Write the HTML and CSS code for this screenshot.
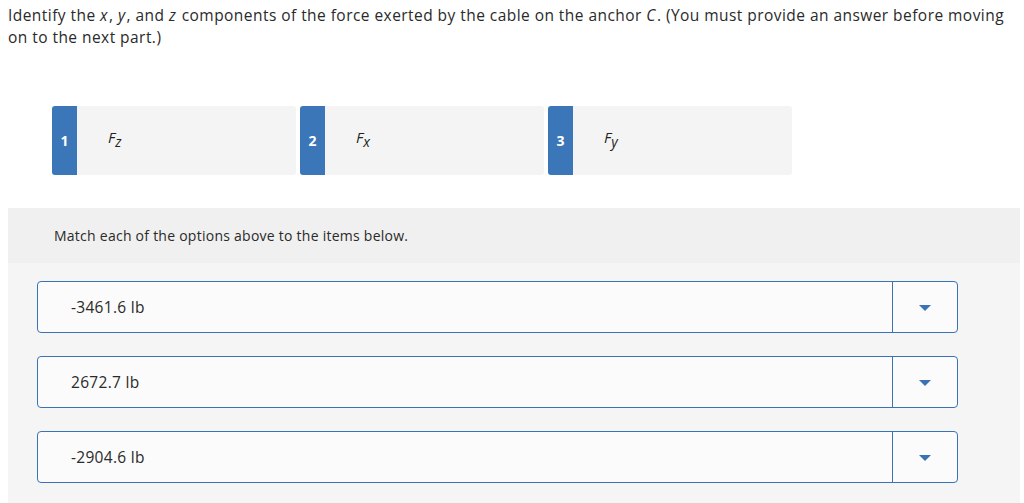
FILE: index.html
```html
<!DOCTYPE html>
<html>
<head>
<meta charset="utf-8">
<link rel="stylesheet" href="styles.css">
</head>
<body>
<p class="prompt">Identify the <i class="var">x</i>, <i class="var">y</i>, and <i class="var">z</i> components of the force exerted by the cable on the anchor <i class="var">C</i>. (You must provide an answer before moving on to the next part.)</p>
<div class="options">
  <div class="card"><span class="badge">1</span><span class="label"><i>F</i><sub><i>z</i></sub></span></div>
  <div class="card"><span class="badge">2</span><span class="label"><i>F</i><sub><i>x</i></sub></span></div>
  <div class="card"><span class="badge">3</span><span class="label"><i>F</i><sub><i>y</i></sub></span></div>
</div>
<div class="panel">
  <div class="panel-head">Match each of the options above to the items below.</div>
  <div class="panel-body">
    <div class="row"><span class="value">-3461.6 lb</span><span class="drop"><span class="caret"></span></span></div>
    <div class="row"><span class="value">2672.7 lb</span><span class="drop"><span class="caret"></span></span></div>
    <div class="row"><span class="value">-2904.6 lb</span><span class="drop"><span class="caret"></span></span></div>
  </div>
</div>
</body>
</html>
```
FILE: styles.css
```css
body {
  margin: 0;
  font-family: "Open Sans", "Liberation Sans", sans-serif;
  color: #2a2a2a;
  background: #fff;
}
.prompt {
  margin: 0;
  padding: 4px 8px 0 8px;
  font-size: 15.5px;
  letter-spacing: 0.45px;
  line-height: 22px;
}
.var {
  display: inline-block;
  padding-right: 1px;
}
.options {
  display: flex;
  gap: 4px;
  padding: 0 0 0 52px;
  margin-top: 58px;
}
.card {
  width: 244px;
  height: 69px;
  background: #f4f4f4;
  border-radius: 3px;
  display: flex;
  align-items: center;
  overflow: hidden;
}
.badge {
  width: 25px;
  align-self: stretch;
  background: #3b76b8;
  color: #fff;
  font-weight: bold;
  font-size: 14px;
  display: flex;
  align-items: center;
  justify-content: center;
}
.label {
  margin-left: 31px;
  font-size: 15px;
  color: #222;
  margin-top: -4px;
}
.label sub {
  font-size: 14px;
  vertical-align: -4px;
}
.panel {
  margin: 33px 4px 0 8px;
  background: #f5f5f5;
}
.panel-head {
  background: #f0f0f0;
  height: 55px;
  display: flex;
  align-items: center;
  padding-left: 46px;
  font-size: 14px;
  letter-spacing: 0.25px;
  color: #2a2a2a;
}
.panel-body {
  padding: 18px 62px 20px 29px;
  display: flex;
  flex-direction: column;
  gap: 23px;
}
.row {
  height: 52px;
  box-sizing: border-box;
  border: 1px solid #3a72b5;
  border-radius: 4px;
  background: #fbfbfb;
  display: flex;
  align-items: center;
}
.value {
  flex: 1;
  padding-left: 33px;
  font-size: 15.5px;
  letter-spacing: 0.3px;
  color: #2a2a2a;
}
.drop {
  width: 64px;
  align-self: stretch;
  border-left: 1px solid #3a72b5;
  display: flex;
  align-items: center;
  justify-content: center;
}
.caret {
  width: 0;
  height: 0;
  border-left: 6px solid transparent;
  border-right: 6px solid transparent;
  border-top: 6px solid #3a72b5;
  margin-top: 2px;
}
```
